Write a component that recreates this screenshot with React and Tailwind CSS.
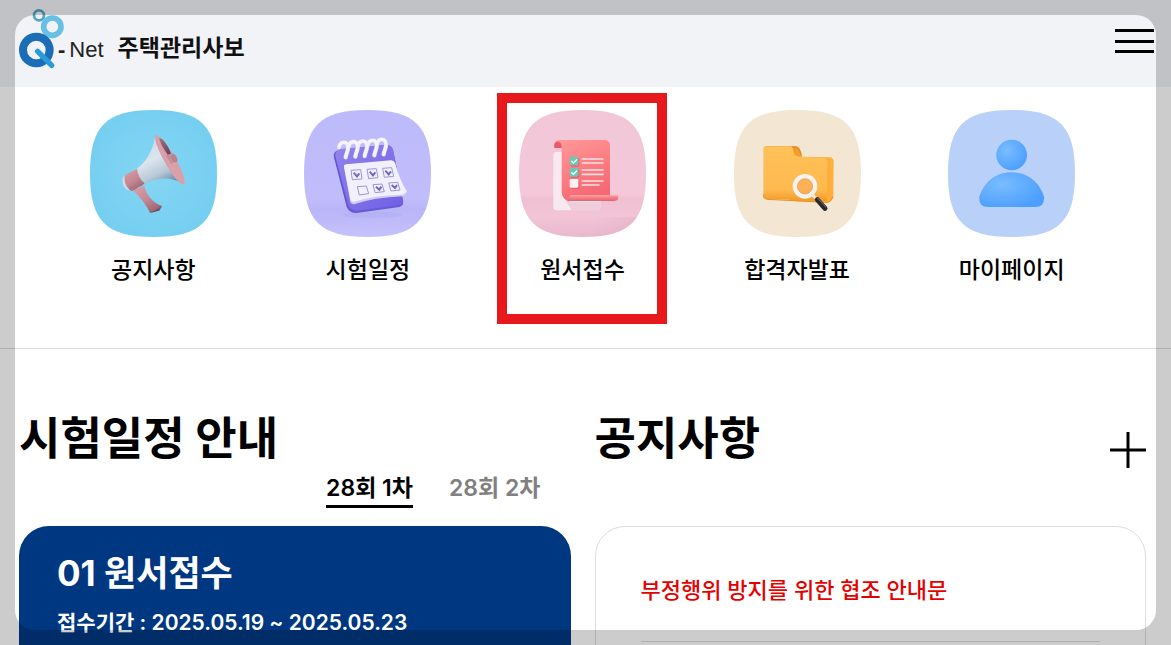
import React, { useState } from 'react'

const SQUIRCLE = 'M0 190.5 C0 48 48 0 190.5 0 S381 48 381 190.5 333 381 190.5 381 0 333 0 190.5 Z'

const Logo = () => (
  <svg viewBox="0 0 144 186" className="w-12 h-[62px]" aria-hidden="true">
    <circle cx="63" cy="22" r="15" fill="none" stroke="#56a3c4" strokeWidth="8" />
    <circle cx="103" cy="56" r="26" fill="none" stroke="#68bfe4" strokeWidth="17" />
    <circle cx="55" cy="126" r="40" fill="none" stroke="#1b6db8" strokeWidth="24" />
    <path d="M59 130 L101 172" stroke="#2a9bd7" strokeWidth="16" strokeLinecap="round" />
  </svg>
)

const MegaphoneIcon = () => (
  <svg viewBox="0 0 381 381" className="w-full" aria-hidden="true">
    <defs>
      <radialGradient id="mgBg">
        <stop offset="0" stopColor="#85d6f3" />
        <stop offset="1" stopColor="#76cff1" />
      </radialGradient>
      <linearGradient id="mgCone" x1="0.2" y1="0" x2="0.7" y2="1">
        <stop offset="0" stopColor="#c3d6e4" />
        <stop offset="0.45" stopColor="#dce5ee" />
        <stop offset="0.75" stopColor="#b6c8d7" />
        <stop offset="1" stopColor="#6b8ba6" />
      </linearGradient>
      <linearGradient id="mgPink" x1="0" y1="0" x2="0.6" y2="1">
        <stop offset="0" stopColor="#dba3ac" />
        <stop offset="0.6" stopColor="#c48591" />
        <stop offset="1" stopColor="#9c6676" />
      </linearGradient>
      <linearGradient id="mgInner" x1="0" y1="0" x2="1" y2="1">
        <stop offset="0" stopColor="#a8717e" />
        <stop offset="1" stopColor="#563f58" />
      </linearGradient>
    </defs>
    <path d={SQUIRCLE} fill="url(#mgBg)" />
    <path d="M128 240 L163 227 C168 253 186 277 216 288 L207 301 L180 309 C170 286 151 262 128 240 Z" fill="url(#mgPink)" />
    <path d="M180 309 L216 288 L208 302 Z" fill="#765566" />
    <path d="M101 199 C93 208 97 228 110 239 L126 242 L116 195 Z" fill="#cfdae6" />
    <path d="M105 195 L142 176 C146 193 153 207 164 220 L153 229 C144 229 136 242 124 243 C109 235 100 211 105 195 Z" fill="url(#mgPink)" />
    <path d="M141 176 C172 152 189 119 196 77 L280 221 C244 202 207 200 164 220 C151 209 143 194 141 176 Z" fill="url(#mgCone)" />
    <path d="M196 75 C216 69 288 185 284 218 C281 230 263 217 247 192 C219 151 190 96 196 75 Z" fill="#d9a0aa" />
    <path d="M208 84 C220 84 240 116 245 138 L235 137 C222 118 210 101 208 84 Z" fill="url(#mgInner)" />
    <path d="M227 136 L246 130 C257 133 262 143 258 153 L243 162 Z" fill="#c78e9a" />
    <ellipse cx="253" cy="145" rx="8" ry="13" fill="#bd808e" transform="rotate(-25 253 145)" />
  </svg>
)

const CalendarIcon = () => (
  <svg viewBox="0 0 381 381" className="w-full" aria-hidden="true">
    <defs>
      <linearGradient id="calBg" x1="0" y1="0" x2="0" y2="1">
        <stop offset="0" stopColor="#bdbafb" />
        <stop offset="0.7" stopColor="#c1bdfb" />
        <stop offset="0.78" stopColor="#b9b5f8" />
        <stop offset="1" stopColor="#c5c2fb" />
      </linearGradient>
      <linearGradient id="calBody" x1="0" y1="0" x2="1" y2="1">
        <stop offset="0" stopColor="#9284ec" />
        <stop offset="1" stopColor="#705ee5" />
      </linearGradient>
    </defs>
    <path d={SQUIRCLE} fill="url(#calBg)" />
    <ellipse cx="205" cy="315" rx="90" ry="10" fill="#aaa6ef" opacity="0.3" />
    <path d="M108 119 L247 105 Q263 106 268 122 L297 272 Q300 286 286 291 L157 309 Q136 309 128 291 L89 139 Q88 122 108 119 Z" fill="#6657d2" />
    <path d="M110 117 L249 104 Q263 105 267 119 L296 268 Q298 282 285 286 L160 302 Q140 303 133 286 L94 139 Q92 121 110 117 Z" fill="url(#calBody)" />
    <path d="M120 171 Q119 165 127 164 L261 152 Q270 152 273 160 Q288 219 309 246 Q307 256 296 259 Q210 262 151 283 Q139 284 138 271 Z" fill="#cfcbf2" />
    <path d="M120 170 Q119 164 127 163 L261 151 Q270 151 273 159 Q288 214 309 244 Q303 253 292 254 Q210 256 151 275 Q140 276 139 266 Z" fill="#f2f0fc" />
    <g fill="none" stroke="#9d95d8" strokeWidth="3">
      <path d="M141 181 L170 179 L174 207 L145 209 Z M189 178 L217 176 L222 203 L194 206 Z M236 175 L263 173 L269 199 L241 202 Z" />
      <path d="M160 230 L187 228 L194 251 L166 255 Z M207 224 L234 222 L241 245 L213 248 Z M254 219 L281 217 L288 240 L261 243 Z" />
    </g>
    <g fill="none" stroke="#7466be" strokeWidth="6">
      <path d="M149 188 L159 199 L166 190 M197 185 L207 196 L214 187 M244 182 L254 193 L261 184" />
      <path d="M216 230 L226 239 L232 230 M263 225 L273 234 L279 225" />
    </g>
    <g fill="none" strokeLinecap="round">
      <g stroke="#d3d0f2" strokeWidth="13">
        <path d="M105 112 C109 92 132 92 132 114 C132 125 127 128 125 142" />
        <path d="M134 110 C138 90 161 90 161 112 C161 123 156 126 154 140" />
        <path d="M162 108 C166 88 189 88 189 110 C189 121 184 124 182 138" />
        <path d="M191 106 C195 86 218 86 218 108 C218 119 213 122 211 136" />
        <path d="M219 103 C223 83 246 83 246 105 C246 116 241 119 239 133" />
      </g>
      <g stroke="#f4f3ff" strokeWidth="10">
        <path d="M105 112 C109 92 132 92 132 114 C132 125 127 128 125 142" />
        <path d="M134 110 C138 90 161 90 161 112 C161 123 156 126 154 140" />
        <path d="M162 108 C166 88 189 88 189 110 C189 121 184 124 182 138" />
        <path d="M191 106 C195 86 218 86 218 108 C218 119 213 122 211 136" />
        <path d="M219 103 C223 83 246 83 246 105 C246 116 241 119 239 133" />
      </g>
    </g>
  </svg>
)

const FormIcon = () => (
  <svg viewBox="0 0 381 381" className="w-full" aria-hidden="true">
    <defs>
      <linearGradient id="fmBg" x1="0" y1="0" x2="0" y2="1">
        <stop offset="0" stopColor="#f1c7d8" />
        <stop offset="0.66" stopColor="#f4c8d9" />
        <stop offset="0.7" stopColor="#f0c0d2" />
        <stop offset="0.84" stopColor="#f2c5d6" />
        <stop offset="1" stopColor="#e9b8cd" />
      </linearGradient>
      <linearGradient id="fmPaper" x1="0.2" y1="0" x2="0.6" y2="1">
        <stop offset="0" stopColor="#ff9696" />
        <stop offset="0.6" stopColor="#fb797f" />
        <stop offset="1" stopColor="#f46773" />
      </linearGradient>
      <linearGradient id="fmRoll" x1="0" y1="0" x2="0" y2="1">
        <stop offset="0" stopColor="#ff9294" />
        <stop offset="1" stopColor="#e85f6c" />
      </linearGradient>
      <linearGradient id="fmShade" x1="0" y1="0" x2="1" y2="0">
        <stop offset="0" stopColor="#e4afc5" stopOpacity="0" />
        <stop offset="1" stopColor="#e4afc5" stopOpacity="0.7" />
      </linearGradient>
      <clipPath id="fmClip">
        <path d={SQUIRCLE} />
      </clipPath>
    </defs>
    <path d={SQUIRCLE} fill="url(#fmBg)" />
    <path d="M220 322 H381 V381 H220 Z" fill="url(#fmShade)" clipPath="url(#fmClip)" />
    <rect x="103" y="126" width="142" height="175" rx="9" fill="#f8e9f0" />
    <path d="M130 255 L150 276 L245 276 L245 301 L158 301 Z" fill="#e9bdcd" opacity="0.6" />
    <path d="M105 114 C103 98 108 90 123 90 L258 90 Q273 92 273 108 L273 257 L148 274 Q129 265 128 247 L128 114 Z" fill="url(#fmPaper)" />
    <path d="M106 114 C104 99 112 93 121 96 Q128 100 128 114 Z" fill="#e15c6e" />
    <path d="M143 271 Q151 265 153 257 L297 257 Q300 260 297 268 Q293 273 285 273 L151 273 Z" fill="url(#fmRoll)" />
    <path d="M154 257 L297 257" stroke="#ffa5a6" strokeWidth="3" />
    <g fill="#d75468" opacity="0.6">
      <rect x="155" y="144" width="26" height="26" rx="4" />
      <rect x="155" y="178" width="26" height="26" rx="4" />
      <rect x="155" y="211" width="26" height="26" rx="4" />
    </g>
    <rect x="152" y="140" width="26" height="26" rx="4" fill="#68c8b2" />
    <rect x="152" y="174" width="26" height="26" rx="4" fill="#68c8b2" />
    <rect x="152" y="207" width="26" height="26" rx="4" fill="#fff1f2" />
    <path d="M158 154 L163 159 L173 149 M158 188 L163 193 L173 183" fill="none" stroke="#effffa" strokeWidth="4" strokeLinecap="round" />
    <path d="M190 147 H252 M190 159 H252 M190 180 H252 M190 193 H252 M190 213 H252 M190 225 H240" stroke="#ffe2e2" strokeWidth="5" strokeLinecap="round" />
  </svg>
)

const FolderIcon = () => (
  <svg viewBox="0 0 381 381" className="w-full" aria-hidden="true">
    <defs>
      <linearGradient id="fdFront" x1="0" y1="0" x2="0" y2="1">
        <stop offset="0" stopColor="#ffc15a" />
        <stop offset="0.8" stopColor="#ffb94e" />
        <stop offset="1" stopColor="#f39a29" />
      </linearGradient>
      <linearGradient id="fdSide" x1="0" y1="0" x2="1" y2="0">
        <stop offset="0" stopColor="#e88b19" />
        <stop offset="1" stopColor="#ffb13d" />
      </linearGradient>
    </defs>
    <path d={SQUIRCLE} fill="#f3e7d3" />
    <path d="M94 108 L187 108 Q203 113 203 140 L289 142 Q299 144 299 155 L298 262 Q294 277 280 278 L170 272 Z" fill="url(#fdSide)" />
    <path d="M88 114 Q88 109 94 109 L169 109 C184 111 171 138 195 140 L271 143 Q280 146 280 155 L279 273 L96 267 Q88 265 88 257 Z" fill="url(#fdFront)" />
    <path d="M88 254 Q88 267 98 268 L276 277 Q292 277 296 260" fill="none" stroke="#e99222" strokeWidth="3" />
    <path d="M176 111 Q198 111 202 137" fill="none" stroke="#d98b22" strokeWidth="3" />
    <circle cx="213" cy="229" r="30" fill="#ffad55" fillOpacity="0.8" stroke="#f7f2ed" strokeWidth="14" />
    <circle cx="213" cy="229" r="23" fill="none" stroke="#d99c5f" strokeWidth="2" />
    <path d="M236 256 L248 266" stroke="#eee8df" strokeWidth="9" />
    <path d="M250 269 L273 295" stroke="#25292c" strokeWidth="15" strokeLinecap="round" />
    <path d="M251 265 L276 291" stroke="#555b60" strokeWidth="4" strokeLinecap="round" />
  </svg>
)

const UserIcon = () => (
  <svg viewBox="0 0 381 381" className="w-full" aria-hidden="true">
    <defs>
      <radialGradient id="usFill" cx="0.35" cy="0.35" r="0.7">
        <stop offset="0" stopColor="#7abcff" />
        <stop offset="1" stopColor="#4c9fff" />
      </radialGradient>
    </defs>
    <path d={SQUIRCLE} fill="#b9d0f8" />
    <circle cx="191" cy="135" r="46" fill="url(#usFill)" />
    <path d="M191 187 C240 187 275 218 288 260 Q291 291 262 291 L120 291 Q91 291 94 260 C107 218 142 187 191 187 Z" fill="url(#usFill)" />
  </svg>
)

const menus = [
  { label: '공지사항', Icon: MegaphoneIcon },
  { label: '시험일정', Icon: CalendarIcon },
  { label: '원서접수', Icon: FormIcon, highlight: true },
  { label: '합격자발표', Icon: FolderIcon },
  { label: '마이페이지', Icon: UserIcon },
]

const tabs = ['28회 1차', '28회 2차']

const App = () => {
  const [activeTab, setActiveTab] = useState(0)

  return (
    <div className="h-screen overflow-hidden bg-white text-black font-['Inter','Noto_Sans_CJK_KR',sans-serif]">
      {/* Header */}
      <header className="flex items-start justify-between h-[87px] bg-[#f1f3f7] pl-[18px] pr-[17px] pt-2">
        <a href="#home" className="flex items-start">
          <Logo />
          <span className="-ml-2 mt-[26px] flex items-center font-['Liberation_Sans',sans-serif] text-[22px] leading-8 text-[#222]">
            <span className="mr-1 font-bold">-</span>
            <span>Net</span>
          </span>
          <span className="ml-[14px] mt-6 text-[23px] leading-8 font-bold text-[#111]">주택관리사보</span>
        </a>
        <button type="button" aria-label="전체메뉴" className="mt-[21px] flex h-6 w-[39px] flex-col justify-between">
          <span className="h-[3px] w-full bg-black"></span>
          <span className="h-[3px] w-full bg-black"></span>
          <span className="h-[3px] w-full bg-black"></span>
        </button>
      </header>

      {/* Quick menu */}
      <nav className="grid grid-cols-5 border-b border-[#ddd] pl-[46px] pr-[52px] pt-[23px] pb-[62px]">
        {menus.map(({ label, Icon, highlight }) => (
          <a key={label} href="#menu" className="relative flex flex-col items-center">
            <span className="block w-[127px]">
              <Icon />
            </span>
            <span className="mt-[17px] text-[23px] leading-8 font-medium">{label}</span>
            {highlight && (
              <span className="absolute -top-[17px] left-1/2 h-[231px] w-[170px] -translate-x-1/2 border-10 border-[#e8191c]"></span>
            )}
          </a>
        ))}
      </nav>

      {/* Schedule and notices */}
      <main className="grid grid-cols-2 gap-6 pl-[19px] pr-[25px] pt-[58px]">
        <section>
          <h2 className="text-[45px] leading-[64px] font-bold">시험일정 안내</h2>
          <div className="flex justify-end gap-9 pr-[30px]">
            {tabs.map((tab, index) => (
              <button
                key={tab}
                type="button"
                onClick={() => setActiveTab(index)}
                className={`h-[37px] border-b-3 text-[23px] leading-8 font-semibold ${activeTab === index ? 'border-black' : 'border-transparent text-[#808080]'}`}
              >
                {tab}
              </button>
            ))}
          </div>
          <div className="mt-[18px] h-72 rounded-[30px] bg-[#003781] px-[38px] pt-[23px] text-white">
            <h3 className="text-[35px] leading-[48px] font-bold">01 원서접수</h3>
            <p className="mt-[10px] text-[21px] leading-8 font-semibold">접수기간 : 2025.05.19 ~ 2025.05.23</p>
          </div>
        </section>

        <section>
          <div className="flex h-[119px] items-start justify-between">
            <h2 className="text-[45px] leading-[64px] font-bold">공지사항</h2>
            <button type="button" aria-label="공지사항 더보기" className="mt-[25px]">
              <svg viewBox="0 0 36 36" className="size-9" aria-hidden="true">
                <path d="M18 0 V36 M0 18 H36" stroke="#000" strokeWidth="3" />
              </svg>
            </button>
          </div>
          <div className="h-72 rounded-[30px] border border-[#ddd] px-[45px] pt-[47px]">
            <a href="#notice" className="block border-b border-[#ddd] pb-[35px] text-[22px] leading-8 font-medium text-[#e60000]">
              부정행위 방지를 위한 협조 안내문
            </a>
          </div>
        </section>
      </main>

      {/* Dimmed frame around the window */}
      <div className="pointer-events-none fixed inset-[15px] rounded-[20px] shadow-[0_0_0_50px_rgba(0,0,0,0.2)]"></div>
    </div>
  )
}

export default App
